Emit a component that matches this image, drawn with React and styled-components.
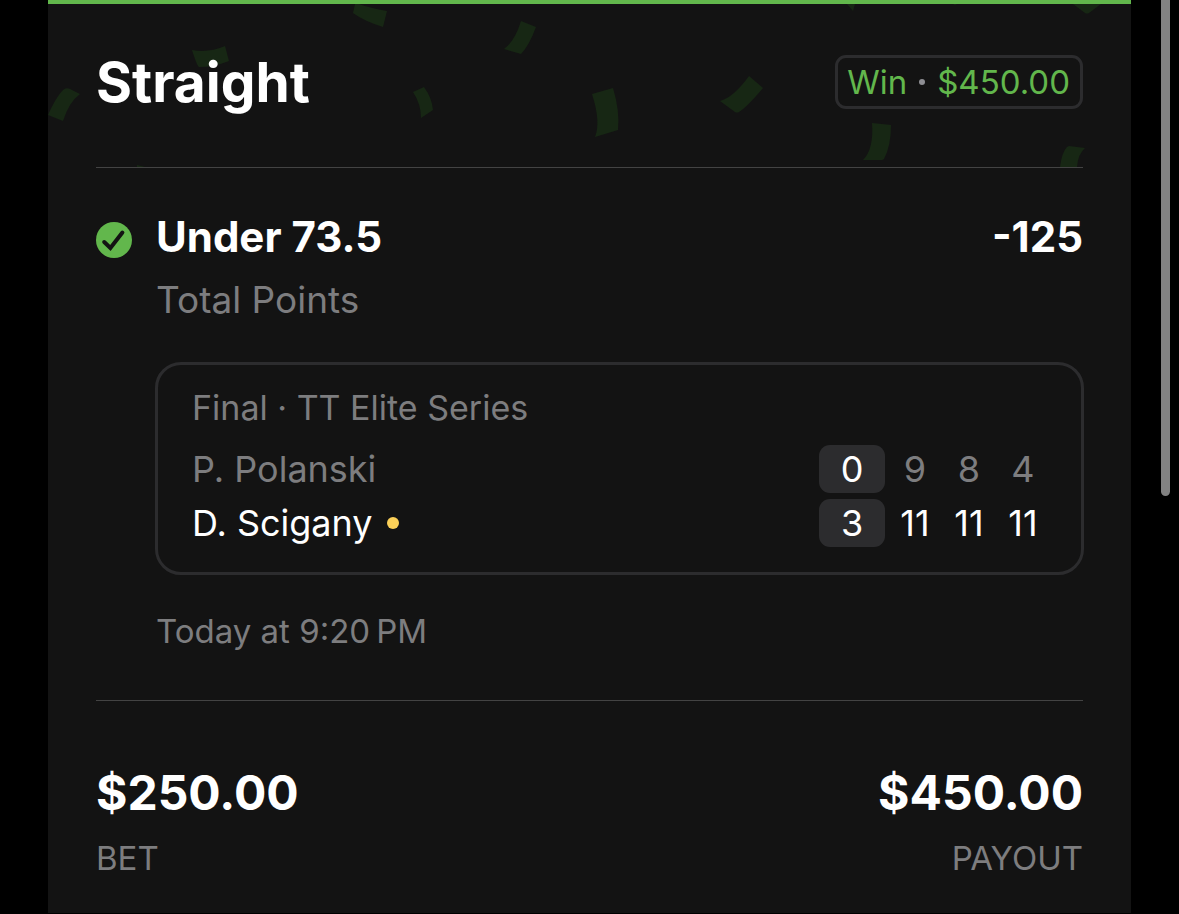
import styled, {createGlobalStyle} from "styled-components";

const GlobalStyle = createGlobalStyle`
  * {
    box-sizing: border-box;
  }

  body {
    margin: 0;
    background: #000000;
    color: #ffffff;
    font-family: Inter, "Liberation Sans", sans-serif;
    font-optical-sizing: none;
  }
`;

const Page = styled.div`
  display: flex;
  align-items: flex-start;
  padding-left: 48px;
`;

const Card = styled.main`
  flex: 1;
  min-width: 0;
  border-top: 4px solid #62b74c;
  background: #131313;
`;

const ScrollGutter = styled.div`
  width: 48px;
  padding-left: 30px;
`;

const ScrollThumb = styled.div`
  width: 9px;
  height: 496px;
  border-radius: 0 0 5px 5px;
  background: #828282;
`;

const Header = styled.header`
  position: relative;
  padding: 0 48px;
`;

const Confetti = styled.svg`
  position: absolute;
  top: 0;
  left: 0;
  width: 100%;
  height: 100%;
  fill: #172714;
`;

const HeaderRow = styled.div`
  position: relative;
  display: flex;
  align-items: center;
  justify-content: space-between;
  padding: 51px 0 58px;
  border-bottom: 1px solid #434343;
`;

const Title = styled.h1`
  margin: 0;
  font-size: 55px;
  line-height: 54px;
  font-weight: 700;
`;

const ResultBadge = styled.div`
  display: flex;
  align-items: center;
  gap: 12px;
  height: 54px;
  padding: 0 10px 0 9px;
  border: 3px solid #2c2c2e;
  border-radius: 11px;
  background: #131313;
  color: #62b74c;
  font-size: 33px;
  line-height: 40px;
`;

const Dot = styled.span`
  width: ${({$size}) => $size}px;
  height: ${({$size}) => $size}px;
  border-radius: 50%;
  background: ${({$color}) => $color};
`;

const Leg = styled.section`
  display: flex;
  gap: 24px;
  margin: 0 48px;
  padding: 42px 0 49px;
  border-bottom: 1px solid #434343;
`;

const StatusIcon = styled.svg`
  flex: none;
  width: 36px;
  height: 36px;
  margin-top: 12px;
`;

const LegBody = styled.div`
  flex: 1;
  min-width: 0;
`;

const LegTop = styled.div`
  display: flex;
  justify-content: space-between;
  font-size: 42px;
  line-height: 54px;
  font-weight: 700;
`;

const Selection = styled.h2`
  margin: 0;
  font: inherit;
`;

const Market = styled.p`
  margin: 12px 0 0;
  color: #7d7d7f;
  font-size: 37px;
  line-height: 48px;
`;

const ScoreBox = styled.div`
  margin: 38px -1px 36px;
  padding: 23px 31px 22px 34px;
  border: 3px solid #2c2c2e;
  border-radius: 26px;
`;

const ScoreTable = styled.table`
  width: 100%;
  border-collapse: collapse;
  font-size: 36px;
  line-height: 48px;
`;

const Competition = styled.caption`
  padding-bottom: 14px;
  color: #7d7d7f;
  font-size: 34px;
  line-height: 40px;
  text-align: left;
`;

const PlayerRow = styled.tr`
  height: 54px;
  color: ${({$winner}) => ($winner ? "#ffffff" : "#7d7d7f")};
`;

const PlayerCell = styled.th`
  padding: 0;
  font-weight: 400;
  text-align: left;
`;

const Player = styled.div`
  display: flex;
  align-items: center;
  gap: 14px;
`;

const SetsCell = styled.td`
  width: 69px;
  padding: 3px 3px 3px 0;
`;

const Sets = styled.div`
  border-radius: 11px;
  background: #2c2c2e;
  color: #ffffff;
  text-align: center;
`;

const ScoreCell = styled.td`
  width: 54px;
  padding: 0;
  text-align: center;
`;

const EventTime = styled.p`
  margin: 0;
  color: #7d7d7f;
  font-size: 33px;
  line-height: 40px;
`;

const Totals = styled.dl`
  display: flex;
  justify-content: space-between;
  margin: 0;
  padding: 62px 48px 35px;
`;

const Total = styled.div`
  display: flex;
  flex-direction: column-reverse;
  gap: 15px;
  text-align: ${({$align}) => $align};
`;

const TotalLabel = styled.dt`
  color: #7d7d7f;
  font-size: 33px;
  line-height: 40px;
  text-transform: uppercase;
`;

const TotalAmount = styled.dd`
  margin: 0;
  font-size: 48px;
  line-height: 60px;
  font-weight: 700;
`;

const confetti = [
    "M48 115L63 121Q69 102 80 94L70 89Q66 87 63 90Q56 97 48 115Z",
    "M355 4L353 13Q364 21 383 27L387 11Q370 8 359 4Z",
    "M192 50Q209 53 225 46L229 61Q214 67 199 67Q197 66 192 50Z",
    "M413 92L424 87Q432 98 433 110L421 118Q421 104 413 92Z",
    "M521 21L536 27Q529 46 521 54L504 49Q515 41 521 21Z",
    "M592 94L613 88Q620 111 618 130L595 137Q601 122 592 94Z",
    "M749 76L763 88Q747 107 739 112Q737 113 735 112L720 101Q734 97 749 76Z",
    "M872 123L891 125Q891 146 884 159L882 160L863 160Q874 149 872 123Z",
    "M1069 146L1085 148Q1078 154 1077 167L1060 167Q1062 152 1067 147Z",
    "M847 4L853 11L855 4Z",
    "M953 4L955 5L957 4Z",
    "M1073 4L1085 13Q1087 14 1089 13L1101 4Z",
    "M137 165L145 167L137 167Z",
];

const players = [
    {name: "P. Polanski", sets: 0, scores: [9, 8, 4]},
    {name: "D. Scigany", sets: 3, scores: [11, 11, 11], winner: true},
];

const App = () => {
    return (
        <>
            <GlobalStyle/>
            <Page>
                <Card>
                    <Header>
                        <Confetti viewBox="48 4 1083 164" preserveAspectRatio="xMidYMin slice" aria-hidden="true">
                            {confetti.map(d => <path key={d} d={d}/>)}
                        </Confetti>
                        <HeaderRow>
                            <Title>Straight</Title>
                            <ResultBadge>
                                <span>Win</span>
                                <Dot $size={6} $color="#8e8e93"/>
                                <span>$450.00</span>
                            </ResultBadge>
                        </HeaderRow>
                    </Header>

                    <Leg>
                        <StatusIcon viewBox="0 0 36 36" role="img" aria-label="Won">
                            <circle cx="18" cy="18" r="18" fill="#62b74c"/>
                            <path d="M8.2 20L14.4 26L26.4 10.6"
                                  fill="none"
                                  stroke="#131313"
                                  strokeWidth="4"
                                  strokeLinecap="round"
                            />
                        </StatusIcon>
                        <LegBody>
                            <LegTop>
                                <Selection>Under 73.5</Selection>
                                <span>-125</span>
                            </LegTop>
                            <Market>Total Points</Market>
                            <ScoreBox>
                                <ScoreTable>
                                    <Competition>Final · TT Elite Series</Competition>
                                    <tbody>
                                        {players.map(({name, sets, scores, winner}) => (
                                            <PlayerRow key={name} $winner={winner}>
                                                <PlayerCell scope="row">
                                                    <Player>
                                                        {name}
                                                        {winner && <Dot $size={12} $color="#fbd058"/>}
                                                    </Player>
                                                </PlayerCell>
                                                <SetsCell><Sets>{sets}</Sets></SetsCell>
                                                {scores.map((score, i) => (
                                                    <ScoreCell key={i}>{score}</ScoreCell>
                                                ))}
                                            </PlayerRow>
                                        ))}
                                    </tbody>
                                </ScoreTable>
                            </ScoreBox>
                            <EventTime>Today at 9:20{"\u202f"}PM</EventTime>
                        </LegBody>
                    </Leg>

                    <Totals>
                        <Total $align="left">
                            <TotalLabel>Bet</TotalLabel>
                            <TotalAmount>$250.00</TotalAmount>
                        </Total>
                        <Total $align="right">
                            <TotalLabel>Payout</TotalLabel>
                            <TotalAmount>$450.00</TotalAmount>
                        </Total>
                    </Totals>
                </Card>
                <ScrollGutter>
                    <ScrollThumb/>
                </ScrollGutter>
            </Page>
        </>
    );
};

export default App;
